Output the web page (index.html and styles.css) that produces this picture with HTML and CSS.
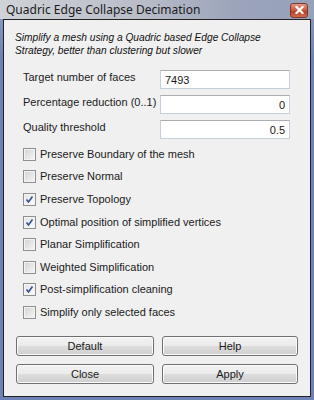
FILE: index.html
```html
<!DOCTYPE html>
<html lang="en">
<head>
    <meta charset="UTF-8">
    <title>Quadric Edge Collapse Decimation</title>
    <link rel="stylesheet" href="styles.css">
</head>
<body>
    <div class="window">
        <div class="titlebar">
            <span class="title">Quadric Edge Collapse Decimation</span>
            <button class="close-btn" aria-label="Close">
                <svg width="9" height="8" viewBox="0 0 9 8"><path d="M1.5 1 L7.5 7 M7.5 1 L1.5 7" stroke="#fff" stroke-width="2.2" stroke-linecap="square"/></svg>
            </button>
        </div>

        <div class="client">
            <p class="description">Simplify a mesh using a Quadric based Edge Collapse Strategy, better than clustering but slower</p>

            <div class="params">
                <label>Target number of faces</label>
                <input type="text" class="field" value="7493">
                <label>Percentage reduction (0..1)</label>
                <input type="text" class="field num" value="0">
                <label>Quality threshold</label>
                <input type="text" class="field num" value="0.5">
            </div>

            <div class="checks">
                <div class="check-row"><span class="box"></span>Preserve Boundary of the mesh</div>
                <div class="check-row"><span class="box"></span>Preserve Normal</div>
                <div class="check-row"><span class="box checked"><svg width="11" height="11" viewBox="0 0 11 11"><path d="M2.5 5.5 L4.5 8 L8.5 2.5" fill="none" stroke="#2f4f94" stroke-width="1.6"/></svg></span>Preserve Topology</div>
                <div class="check-row"><span class="box checked"><svg width="11" height="11" viewBox="0 0 11 11"><path d="M2.5 5.5 L4.5 8 L8.5 2.5" fill="none" stroke="#2f4f94" stroke-width="1.6"/></svg></span>Optimal position of simplified vertices</div>
                <div class="check-row"><span class="box"></span>Planar Simplification</div>
                <div class="check-row"><span class="box"></span>Weighted Simplification</div>
                <div class="check-row"><span class="box checked"><svg width="11" height="11" viewBox="0 0 11 11"><path d="M2.5 5.5 L4.5 8 L8.5 2.5" fill="none" stroke="#2f4f94" stroke-width="1.6"/></svg></span>Post-simplification cleaning</div>
                <div class="check-row"><span class="box"></span>Simplify only selected faces</div>
            </div>

            <div class="buttons">
                <button class="btn">Default</button>
                <button class="btn">Help</button>
                <button class="btn">Close</button>
                <button class="btn">Apply</button>
            </div>
        </div>
    </div>
</body>
</html>
```

FILE: styles.css
```css
body {
    margin: 0;
    padding: 0;
    background: #6f82b6;
    font-family: "Liberation Sans", Arial, sans-serif;
    font-size: 11px;
    color: #1a1a1a;
}

.window {
    width: 314px;
    height: 400px;
    display: flex;
    flex-direction: column;
    background: linear-gradient(#8f9ec4, #6f82b6 60px);
}

.titlebar {
    height: 19px;
    display: flex;
    align-items: center;
    justify-content: space-between;
    padding: 0 6px 0 6px;
    background: linear-gradient(90deg, #cfd2d7 0%, #b8bdc8 45%, #9ba4ba 75%, #97a1b8 100%);
}

.title {
    font-family: "Noto Sans", sans-serif;
    font-size: 12px;
    color: #1b1b1b;
    margin-top: -1px;
}

.close-btn {
    width: 18px;
    height: 15px;
    margin-top: 1px;
    padding: 0;
    border: 1px solid #7d3a2c;
    border-radius: 3px;
    background: linear-gradient(#e09a88, #c9553c 50%, #b53a22 51%, #d06a4c);
    display: flex;
    align-items: center;
    justify-content: center;
}

.client {
    height: 376px;
    margin: 0 3px;
    border: 1px solid #222;
    background: #f0f0f0;
    display: flex;
    flex-direction: column;
}

.description {
    margin: 11px 0 0 11px;
    font-style: italic;
    font-size: 10.2px;
    line-height: 13px;
    color: #111;
    width: 270px;
}

.params {
    display: grid;
    grid-template-columns: 137px 130px;
    row-gap: 6px;
    margin: 13px 0 0 19px;
}

.params label {
    line-height: 13px;
    padding-top: 1px;
}

.field {
    height: 19px;
    box-sizing: border-box;
    border: 1px solid #c5cedb;
    border-top-color: #abadb3;
    background: #fff;
    font-family: "Liberation Sans", Arial, sans-serif;
    font-size: 11px;
    padding: 0 4px;
    color: #1a1a1a;
    margin: 0;
}

.field.num {
    text-align: right;
}

.checks {
    margin: 4px 0 0 19px;
    display: flex;
    flex-direction: column;
}

.check-row {
    height: 22.6px;
    display: flex;
    align-items: center;
    gap: 4px;
    line-height: 13px;
}

.box {
    width: 11px;
    height: 11px;
    border: 1px solid #8f8f8f;
    background: linear-gradient(135deg, #d2d2d2, #f7f7f7);
    box-shadow: inset 0 0 0 1px #f4f4f4;
    display: flex;
    align-items: center;
    justify-content: center;
}

.box.checked {
    background: linear-gradient(135deg, #e4e4e4, #fbfbfb);
}

.buttons {
    display: grid;
    grid-template-columns: 138px 136px;
    column-gap: 8px;
    row-gap: 8px;
    margin: 12px 0 0 12px;
}

.btn {
    height: 20px;
    padding: 0;
    border: 1px solid #707070;
    border-radius: 3px;
    background: linear-gradient(#f2f2f2 0%, #ebebeb 50%, #dddddd 51%, #cfcfcf 100%);
    box-shadow: inset 0 0 0 1px #fbfbfb;
    font-family: "Liberation Sans", Arial, sans-serif;
    font-size: 11px;
    color: #1a1a1a;
}
```
